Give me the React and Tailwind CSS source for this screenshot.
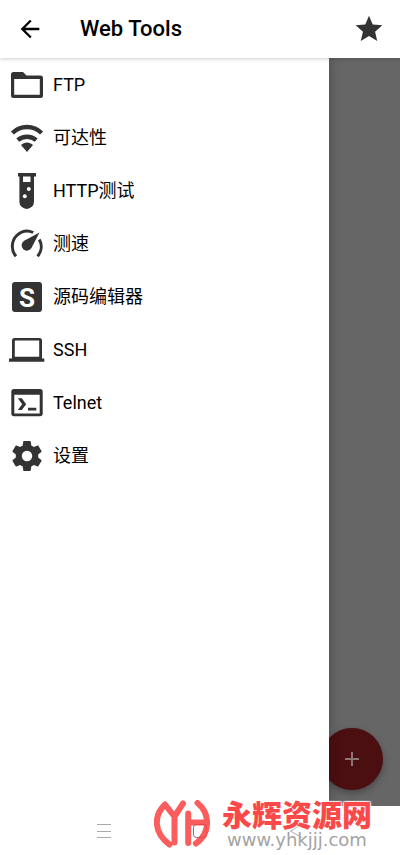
import React from 'react';
import { MdAdd, MdArrowBack, MdStar } from 'react-icons/md';

const MenuIcon = ({ children }) => (
  <svg viewBox="0 0 36 36" fill="currentColor" aria-hidden="true" className="size-9 shrink-0 overflow-visible text-[#333333]">
    {children}
  </svg>
);

const FolderIcon = () => (
  <MenuIcon>
    <path fillRule="evenodd" d="M4.5 5H14l3.5 3.5h14A2.5 2.5 0 0 1 34 11v17.5a2.5 2.5 0 0 1-2.5 2.5h-27A2.5 2.5 0 0 1 2 28.5v-21A2.5 2.5 0 0 1 4.5 5zM5.2 12v15.8h25.6V12z" />
  </MenuIcon>
);

const WifiIcon = () => (
  <MenuIcon>
    <g fill="none" stroke="currentColor" strokeWidth="4.4">
      <path d="M3.4 13C11.5 5 24.5 5 32.6 13" />
      <path d="M8.8 20.2c5.2-4.7 13.2-4.7 18.4 0" />
    </g>
    <path d="M12 25c3.5-3.500 8.500-3.500 12 0L18 32z" />
  </MenuIcon>
);

const TestTubeIcon = () => (
  <MenuIcon>
    <path fillRule="evenodd" d="M9 0h18v3.500h-2v25.200a7.300 7.300 0 0 1-14.600 0V3.500H9zM14 3.500V9h7.500V3.500z" />
    <circle cx="19.800" cy="16" r="2" fill="#fff" />
    <circle cx="15.800" cy="23.300" r="2" fill="#fff" />
  </MenuIcon>
);

const SpeedIcon = () => (
  <MenuIcon>
    <g fill="none" stroke="currentColor" strokeWidth="3">
      <path d="M7 30.200C1.500 24 2.500 14.500 7.800 9.500c4.400-4.200 10.500-5.800 16.400-3" />
      <path d="M30.300 13.500c3 5.500 2.500 12-1.800 16.700" />
    </g>
    <path d="M30.500 6.500 22.600 21.800a5.300 5.300 0 1 1-7.400-7z" />
  </MenuIcon>
);

const SourceIcon = () => (
  <MenuIcon>
    <rect x="3" y="3" width="30" height="30" rx="3" />
    <text x="18" y="27.500" textAnchor="middle" fontSize="26" fill="#fff" className="font-[Roboto] font-bold">S</text>
  </MenuIcon>
);

const LaptopIcon = () => (
  <MenuIcon>
    <path fillRule="evenodd" d="M5.500 6h25A2.500 2.500 0 0 1 33 8.500v18h2.300v3.200H0v-3.200h3v-18A2.500 2.500 0 0 1 5.500 6zM5.800 8.500v16.200h24.400V8.500z" />
  </MenuIcon>
);

const ConsoleIcon = () => (
  <MenuIcon>
    <path fillRule="evenodd" d="M5 4h26a2.700 2.700 0 0 1 2.700 2.700v21.900a2.700 2.700 0 0 1-2.700 2.700H5a2.700 2.700 0 0 1-2.700-2.700V6.700A2.700 2.700 0 0 1 5 4zM5.300 9.700v18.700h25.400V9.700z" />
    <path d="M8.800 13.300h4l4.400 5.900-4.400 5.900h-4l4.400-5.900zM19 22.700h8.300v2.700H19z" />
  </MenuIcon>
);

const CogIcon = () => (
  <svg viewBox="0 0 24 24" fill="currentColor" aria-hidden="true" className="size-9 shrink-0 text-[#333333]">
    <path d="M12,15.5A3.5,3.5 0 0,1 8.5,12A3.5,3.5 0 0,1 12,8.5A3.5,3.5 0 0,1 15.5,12A3.5,3.5 0 0,1 12,15.5M19.43,12.97C19.47,12.65 19.5,12.33 19.5,12C19.5,11.67 19.47,11.34 19.43,11L21.54,9.37C21.73,9.22 21.78,8.95 21.66,8.73L19.66,5.27C19.54,5.05 19.27,4.96 19.05,5.05L16.56,6.05C16.04,5.66 15.5,5.32 14.87,5.07L14.5,2.42C14.46,2.18 14.25,2 14,2H10C9.75,2 9.54,2.18 9.5,2.42L9.13,5.07C8.5,5.32 7.96,5.66 7.44,6.05L4.95,5.05C4.73,4.96 4.46,5.05 4.34,5.27L2.34,8.73C2.21,8.95 2.27,9.22 2.46,9.37L4.57,11C4.53,11.34 4.5,11.67 4.5,12C4.5,12.33 4.53,12.65 4.57,12.97L2.46,14.63C2.27,14.78 2.21,15.05 2.34,15.27L4.34,18.73C4.46,18.95 4.73,19.03 4.95,18.95L7.44,17.94C7.96,18.34 8.5,18.68 9.13,18.93L9.5,21.58C9.54,21.82 9.75,22 10,22H14C14.25,22 14.46,21.82 14.5,21.58L14.87,18.93C15.5,18.67 16.04,18.34 16.56,17.94L19.05,18.95C19.27,19.03 19.54,18.95 19.66,18.73L21.66,15.27C21.78,15.05 21.73,14.78 21.54,14.63L19.43,12.97Z" />
  </svg>
);

const menuItems = [
  { label: 'FTP', Icon: FolderIcon },
  { label: '可达性', Icon: WifiIcon },
  { label: 'HTTP测试', Icon: TestTubeIcon },
  { label: '测速', Icon: SpeedIcon },
  { label: '源码编辑器', Icon: SourceIcon },
  { label: 'SSH', Icon: LaptopIcon },
  { label: 'Telnet', Icon: ConsoleIcon },
  { label: '设置', Icon: CogIcon },
];

const Header = () => (
  <header className="relative z-20 flex h-[58px] shrink-0 items-center bg-white pr-[15px] pl-4 shadow-[0_1px_4px_rgba(0,0,0,0.2)]">
    <button type="button" aria-label="Back" className="text-black">
      <MdArrowBack className="size-7" />
    </button>
    <h1 className="ml-9 flex-1 text-[22px] leading-7 font-medium">Web Tools</h1>
    <button type="button" aria-label="Favorite" className="text-[#333333]">
      <MdStar className="size-8" />
    </button>
  </header>
);

const Drawer = () => (
  <nav className="relative z-10 w-[329px] max-w-[83%] shrink-0 bg-white shadow-[2px_0_10px_rgba(0,0,0,0.2)]">
    <ul>
      {menuItems.map(({ label, Icon }) => (
        <li key={label}>
          <button type="button" className="flex h-[53px] w-full items-center gap-2 pl-[9px] text-left text-lg">
            <Icon />
            <span>{label}</span>
          </button>
        </li>
      ))}
    </ul>
  </nav>
);

const SystemBar = () => (
  <div className="relative z-10 flex h-[49px] shrink-0 items-center justify-center gap-[82px] bg-white text-[#aaaaaa]">
    <button type="button" aria-label="Recent apps">
      <svg width="14" height="16" viewBox="0 0 14 16" fill="none" stroke="currentColor" strokeWidth="1">
        <path d="M0 1.500h14M0 8.500h14M0 14.500h14" />
      </svg>
    </button>
    <button type="button" aria-label="Home">
      <svg width="14" height="14" viewBox="0 0 14 14" fill="none" stroke="#777777">
        <rect x="0.500" y="0.500" width="13" height="13" rx="3" />
      </svg>
    </button>
    <button type="button" aria-label="Back">
      <svg width="14" height="16" viewBox="0 0 14 16" fill="none" stroke="currentColor">
        <path d="M12.500 1.500 1.500 8l11 6.500" />
      </svg>
    </button>
  </div>
);

const Watermark = () => (
  <div className="pointer-events-none absolute right-[28px] bottom-[6px] z-30 flex items-center gap-3">
    <svg width="56" height="50" viewBox="0 0 56 50" fill="none" stroke="#fb4040" strokeWidth="6" strokeLinecap="round" strokeLinejoin="round" className="opacity-85">
      <path d="M15.500 45.500C0 34-1 17 11 5.500l9.500 12L29 4.500M20.500 17.500v26" />
      <path d="M34.200 14.500v29.500M34.200 23.500H52M43.500 4C56 14 57 34 42 44.500" />
    </svg>
    <div className="flex flex-col">
      <p className="text-[30px] leading-8 font-black text-[#fb4848] [text-shadow:1px_1px_1px_#ffffffb0,-1px_-1px_1px_#ffffffb0,1px_-1px_1px_#ffffffb0,-1px_1px_1px_#ffffffb0]">永辉资源网</p>
      <p className="pl-[5px] font-['DejaVu_Sans'] text-lg leading-4 text-[#a3a3a3]">www.yhkjjj.com</p>
    </div>
  </div>
);

const App = () => (
  <div className="relative flex min-h-screen flex-col bg-white font-[Roboto,'Noto_Sans_CJK_SC',sans-serif] text-black">
    <Header />
    <div className="flex flex-1">
      <Drawer />
      {/* Dimmed page behind the open drawer */}
      <main className="relative flex-1 bg-[#666666]">
        <button type="button" aria-label="Add" className="absolute right-[17px] bottom-4 flex size-[62px] items-center justify-center rounded-full bg-[#4b0f12] text-[#8f7475] shadow-[0_3px_7px_rgba(0,0,0,0.3)]">
          <MdAdd className="size-6" />
        </button>
      </main>
    </div>
    <SystemBar />
    <Watermark />
  </div>
);

export default App;
